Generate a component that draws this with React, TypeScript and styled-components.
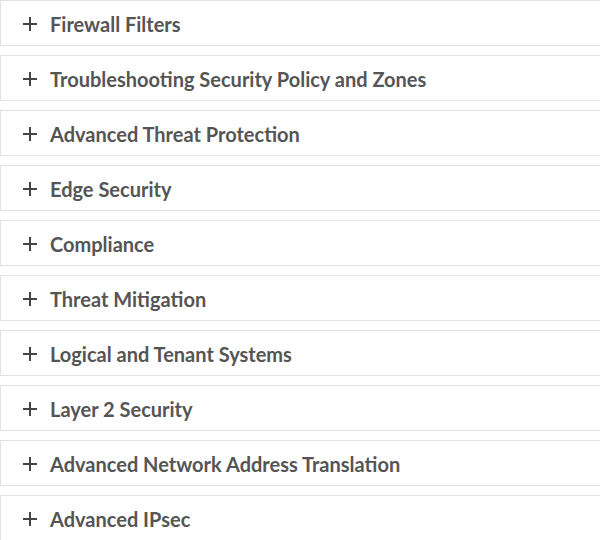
import React, { useState } from 'react';
import styled, { createGlobalStyle } from 'styled-components';

const topics = [
    'Firewall Filters',
    'Troubleshooting Security Policy and Zones',
    'Advanced Threat Protection',
    'Edge Security',
    'Compliance',
    'Threat Mitigation',
    'Logical and Tenant Systems',
    'Layer 2 Security',
    'Advanced Network Address Translation',
    'Advanced IPsec',
];

const App = () => {
    const [open, setOpen] = useState<number | null>(null)

    return <>
        <GlobalStyle />
        <List>
            {topics.map((t, i) => (
                <Item key={t}>
                    <Header onClick={() => setOpen(open === i ? null : i)}>
                        <PlusIcon viewBox="0 0 14 14">
                            <path d="M7 0v14M0 7h14" stroke="currentColor" strokeWidth="2" />
                        </PlusIcon>
                        <Title>{t}</Title>
                    </Header>
                </Item>
            ))}
        </List>
    </>
}

export default App

const GlobalStyle = createGlobalStyle`
    body {
        margin: 0;
        background: #fff;
        font-family: Lato, "Liberation Sans", sans-serif;
        overflow: hidden;
    }
`
const List = styled.div`
    display: flex;
    flex-direction: column;
    gap: 9px;
    width: 620px;
`
const Item = styled.section`
    border: 1px solid #e2e2e2;
    background: #fff;
`
const Header = styled.button`
    display: flex;
    align-items: center;
    gap: 13px;
    width: 100%;
    height: 44px;
    padding: 2px 0 0 22px;
    border: none;
    background: none;
    cursor: pointer;
    color: #555;
    font: inherit;
    text-align: left;
`
const PlusIcon = styled.svg`
    width: 14px;
    height: 14px;
    flex-shrink: 0;
    color: #444;
`
const Title = styled.span`
    font-size: 20px;
    font-weight: 700;
    color: #555;
`
